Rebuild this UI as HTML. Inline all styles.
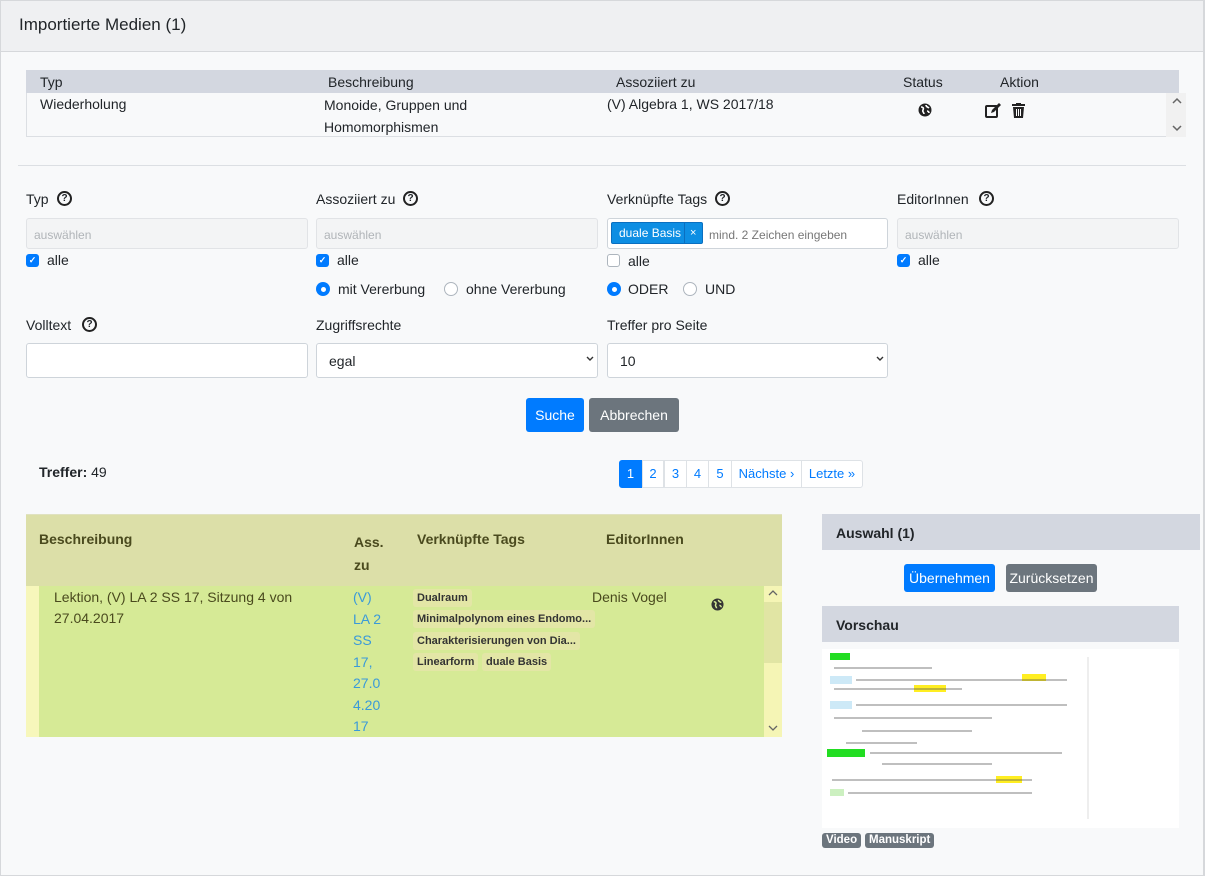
<!DOCTYPE html>
<html><head><meta charset="utf-8">
<style>
*{box-sizing:border-box;margin:0;padding:0}
body{width:1205px;height:876px;background:#f8f9fa;font-family:"Liberation Sans",sans-serif;font-size:14px;color:#212529;position:relative;overflow:hidden}
.a{position:absolute}
.hdr{left:0;top:0;width:1205px;height:52px;background:#eff0f2;border-bottom:1px solid #d6d8db;border-top:1px solid #d6d8db}
.hdr span{position:absolute;left:19px;top:14px;font-size:17px}
.inp{background:#f3f4f5;border:1px solid #e1e3e6;border-radius:3px;height:31px;color:#b0b4b8;font-size:12px;padding:9px 0 0 7px}
.inpw{background:#fff;border:1px solid #ced4da;border-radius:3px;height:35px;font-size:14px;padding:9px 0 0 12px}
.cb{width:13px;height:13px;border-radius:3px;background:#007bff;color:#fff;font-size:9px;line-height:13px;text-align:center;font-weight:bold}
.cbo{width:13px;height:13px;border-radius:3px;border:1px solid #adb5bd;background:#fff}
.rd{width:14px;height:14px;border-radius:50%;background:#007bff}
.rd::after{content:"";position:absolute;left:4.5px;top:4.5px;width:5px;height:5px;border-radius:50%;background:#fff}
.rdo{width:14px;height:14px;border-radius:50%;border:1px solid #adb5bd;background:#fff}
.q{width:15px;height:15px;border:2px solid #222;border-radius:50%;font-size:10px;font-weight:bold;text-align:center;line-height:11px}
.btn{border-radius:3px;color:#fff;font-size:14px;text-align:center}
.pg{top:460px;height:28px;border:1px solid #dee2e6;background:#fff;color:#007bff;font-size:13px;text-align:center;line-height:26px}
.tag{background:#e3e6a6;font-weight:bold;font-size:11px;color:#333;padding:2px 4px;border-radius:3px;height:18px;line-height:14px}
.badge{background:#6c757d;color:#fff;font-weight:bold;font-size:11.5px;border-radius:3px;height:15px;line-height:15px;padding:0 4px;top:833px}
</style></head><body>
<div class="a hdr"><span>Importierte Medien (1)</span></div>
<div class="a" style="left:0;top:0;width:1px;height:876px;background:#d6d8db"></div>
<div class="a" style="left:1203px;top:0;width:2px;height:876px;background:#d6d8db"></div>
<div class="a" style="left:0;top:875px;width:1205px;height:1px;background:#d6d8db"></div>

<div class="a" style="left:26px;top:70px;width:1153px;height:67px;border:1px solid #dcdfe3;background:#f8f9fa"></div>
<div class="a" style="left:26px;top:70px;width:1153px;height:23px;background:#d3d7e0"></div>
<div class="a" style="left:40px;top:74px">Typ</div>
<div class="a" style="left:328px;top:74px">Beschreibung</div>
<div class="a" style="left:616px;top:74px">Assoziiert zu</div>
<div class="a" style="left:903px;top:74px">Status</div>
<div class="a" style="left:1000px;top:74px">Aktion</div>
<div class="a" style="left:40px;top:96px">Wiederholung</div>
<div class="a" style="left:324px;top:94px;line-height:22px">Monoide, Gruppen und<br>Homomorphismen</div>
<div class="a" style="left:607px;top:96px">(V) Algebra 1, WS 2017/18</div>
<svg class="a" style="left:918px;top:103px" width="14" height="14" viewBox="0 0 14 14"><circle cx="7" cy="7" r="6.5" fill="#222"/><path d="M3 4c2 0 3 1 2 3s1 2 1 4M8 2c0 2 2 2 3 3M9 8c1 0 2 1 2 2" stroke="#fff" stroke-width="1.6" fill="none"/></svg>
<svg class="a" style="left:985px;top:103px" width="16" height="15" viewBox="0 0 16 15"><rect x="1" y="3" width="11" height="11" rx="1" fill="none" stroke="#222" stroke-width="2"/><path d="M6 10l1-3 7-7 2 2-7 7z" fill="#222"/></svg>
<svg class="a" style="left:1012px;top:103px" width="13" height="15" viewBox="0 0 13 15"><rect x="0" y="1" width="13" height="2" fill="#222"/><rect x="4" y="0" width="5" height="2" fill="#222"/><path d="M1 4h11l-1 11H2z" fill="#222"/><path d="M4.5 6v7M6.5 6v7M8.5 6v7" stroke="#fff" stroke-width="1"/></svg>
<div class="a" style="left:1166px;top:93px;width:20px;height:44px;background:#f1f1f1"></div>
<svg class="a" style="left:1172px;top:97px" width="10" height="36" viewBox="0 0 10 36"><path d="M1 6l4-4 4 4M1 29l4 4 4-4" stroke="#666" stroke-width="1.5" fill="none"/></svg>

<div class="a" style="left:18px;top:165px;width:1168px;height:1px;background:#dcdfe3"></div>

<div class="a" style="left:26px;top:191px">Typ</div><div class="a q" style="left:57px;top:191px">?</div>
<div class="a" style="left:316px;top:191px">Assoziiert zu</div><div class="a q" style="left:403px;top:191px">?</div>
<div class="a" style="left:607px;top:191px">Verknüpfte Tags</div><div class="a q" style="left:715px;top:191px">?</div>
<div class="a" style="left:897px;top:191px">EditorInnen</div><div class="a q" style="left:979px;top:191px">?</div>

<div class="a inp" style="left:26px;top:218px;width:282px">auswählen</div>
<div class="a inp" style="left:316px;top:218px;width:282px">auswählen</div>
<div class="a inpw" style="left:607px;top:218px;width:281px;height:31px;padding:0"></div>
<div class="a" style="left:611px;top:222px;width:92px;height:22px;background:#0d8ee3;border:1px solid #0a6fc0;border-radius:2px;color:#fff;font-size:12px;line-height:20px;padding-left:7px">duale Basis<span style="position:absolute;left:72px;top:0;border-left:1px solid #0a6fc0;padding-left:5px;font-size:11px;height:20px">×</span></div>
<div class="a" style="left:709px;top:228px;font-size:12px;color:#777">mind. 2 Zeichen eingeben</div>
<div class="a inp" style="left:897px;top:218px;width:282px">auswählen</div>

<div class="a cb" style="left:26px;top:254px">✓</div><div class="a" style="left:47px;top:252px">alle</div>
<div class="a cb" style="left:316px;top:254px">✓</div><div class="a" style="left:337px;top:252px">alle</div>
<div class="a cbo" style="left:607px;top:254px"></div><div class="a" style="left:628px;top:253px">alle</div>
<div class="a cb" style="left:897px;top:254px">✓</div><div class="a" style="left:918px;top:252px">alle</div>

<div class="a rd" style="left:316px;top:282px"></div><div class="a" style="left:338px;top:281px">mit Vererbung</div>
<div class="a rdo" style="left:444px;top:282px"></div><div class="a" style="left:466px;top:281px">ohne Vererbung</div>
<div class="a rd" style="left:607px;top:282px"></div><div class="a" style="left:628px;top:281px">ODER</div>
<div class="a rdo" style="left:683px;top:282px"></div><div class="a" style="left:705px;top:281px">UND</div>

<div class="a" style="left:26px;top:317px">Volltext</div><div class="a q" style="left:82px;top:317px">?</div>
<div class="a" style="left:316px;top:317px">Zugriffsrechte</div>
<div class="a" style="left:607px;top:317px">Treffer pro Seite</div>
<div class="a inpw" style="left:26px;top:343px;width:282px"></div>
<div class="a inpw" style="left:316px;top:343px;width:282px">egal</div>
<div class="a inpw" style="left:607px;top:343px;width:281px">10</div>
<svg class="a" style="left:586px;top:356px" width="8" height="6" viewBox="0 0 8 6"><path d="M1 1l3 3 3-3" stroke="#333" stroke-width="1.4" fill="none"/></svg>
<svg class="a" style="left:876px;top:356px" width="8" height="6" viewBox="0 0 8 6"><path d="M1 1l3 3 3-3" stroke="#333" stroke-width="1.4" fill="none"/></svg>

<div class="a btn" style="left:526px;top:398px;width:58px;height:34px;line-height:34px;background:#007bff">Suche</div>
<div class="a btn" style="left:589px;top:398px;width:90px;height:34px;line-height:34px;background:#6c757d">Abbrechen</div>

<div class="a" style="left:39px;top:464px"><b>Treffer:</b> 49</div>
<div class="a pg" style="left:619px;width:23px;background:#007bff;color:#fff;border-color:#007bff;border-radius:3px 0 0 3px">1</div>
<div class="a pg" style="left:642px;width:22px">2</div>
<div class="a pg" style="left:664px;width:23px">3</div>
<div class="a pg" style="left:686px;width:23px">4</div>
<div class="a pg" style="left:708px;width:24px">5</div>
<div class="a pg" style="left:731px;width:71px">Nächste ›</div>
<div class="a pg" style="left:801px;width:62px;border-radius:0 3px 3px 0">Letzte »</div>

<div class="a" style="left:26px;top:514px;width:756px;height:72px;background:#dcdfa8;border-top:1px solid #e0e2c0"></div>
<div class="a" style="left:39px;top:531px;font-weight:bold;color:#4a4a1e">Beschreibung</div>
<div class="a" style="left:354px;top:531px;font-weight:bold;color:#4a4a1e;line-height:23px">Ass.<br>zu</div>
<div class="a" style="left:417px;top:531px;font-weight:bold;color:#4a4a1e">Verknüpfte Tags</div>
<div class="a" style="left:606px;top:531px;font-weight:bold;color:#4a4a1e">EditorInnen</div>
<div class="a" style="left:26px;top:586px;width:756px;height:151px;background:#d6ea96"></div>
<div class="a" style="left:26px;top:586px;width:13px;height:151px;background:#f7f7bb"></div>
<div class="a" style="left:764px;top:586px;width:18px;height:151px;background:#f5f5b5"></div>
<div class="a" style="left:764px;top:602px;width:18px;height:61px;background:#e1e5a4"></div>
<svg class="a" style="left:768px;top:589px" width="10" height="146" viewBox="0 0 10 146"><path d="M1 6l4-4 4 4M1 137l4 4 4-4" stroke="#666" stroke-width="1.3" fill="none"/></svg>
<div class="a" style="left:54px;top:587px;line-height:21px;color:#4a4a1e">Lektion, (V) LA 2 SS 17, Sitzung 4 von<br>27.04.2017</div>
<div class="a" style="left:353px;top:587px;line-height:21.5px;color:#3a9ad9">(V)<br>LA 2<br>SS<br>17,<br>27.0<br>4.20<br>17</div>
<div class="a tag" style="left:413px;top:589px">Dualraum</div>
<div class="a tag" style="left:413px;top:610px">Minimalpolynom eines Endomo...</div>
<div class="a tag" style="left:413px;top:632px">Charakterisierungen von Dia...</div>
<div class="a tag" style="left:413px;top:653px">Linearform</div>
<div class="a tag" style="left:482px;top:653px">duale Basis</div>
<div class="a" style="left:592px;top:589px;color:#4a4a1e">Denis Vogel</div>
<svg class="a" style="left:711px;top:598px" width="13" height="13" viewBox="0 0 14 14"><circle cx="7" cy="7" r="6.5" fill="#333"/><path d="M3 4c2 0 3 1 2 3s1 2 1 4M8 2c0 2 2 2 3 3M9 8c1 0 2 1 2 2" stroke="#d6ea96" stroke-width="1.6" fill="none"/></svg>

<div class="a" style="left:822px;top:514px;width:378px;height:36px;background:#d3d7e0;font-weight:bold;padding:11px 0 0 14px">Auswahl (1)</div>
<div class="a btn" style="left:904px;top:564px;width:91px;height:28px;line-height:28px;background:#007bff">Übernehmen</div>
<div class="a btn" style="left:1006px;top:564px;width:91px;height:28px;line-height:28px;background:#6c757d">Zurücksetzen</div>
<div class="a" style="left:822px;top:606px;width:357px;height:36px;background:#d3d7e0;font-weight:bold;padding:11px 0 0 14px">Vorschau</div>
<div class="a" style="left:822px;top:649px;width:357px;height:179px;background:#fff"></div>
<svg class="a" style="left:822px;top:649px" width="270" height="180" viewBox="0 0 270 180">
<rect x="8" y="4" width="20" height="7" fill="#22dd22"/>
<rect x="8" y="27" width="22" height="8" fill="#cde9f7"/>
<rect x="8" y="52" width="22" height="8" fill="#cde9f7"/>
<rect x="200" y="25" width="24" height="7" fill="#ffee22"/>
<rect x="92" y="36" width="32" height="7" fill="#ffee22"/>
<rect x="5" y="100" width="38" height="8" fill="#22dd22"/>
<rect x="174" y="127" width="26" height="7" fill="#ffee22"/>
<rect x="8" y="140" width="14" height="7" fill="#ccf0c0"/>
<g stroke="#555" stroke-width="0.8">
<line x1="12" y1="19" x2="110" y2="19"/><line x1="34" y1="31" x2="245" y2="31"/><line x1="12" y1="40" x2="140" y2="40"/>
<line x1="34" y1="56" x2="245" y2="56"/><line x1="12" y1="69" x2="170" y2="69"/><line x1="40" y1="82" x2="150" y2="82"/>
<line x1="24" y1="94" x2="95" y2="94"/><line x1="48" y1="104" x2="240" y2="104"/><line x1="60" y1="115" x2="170" y2="115"/>
<line x1="10" y1="131" x2="210" y2="131"/><line x1="26" y1="144" x2="210" y2="144"/>
</g>
<line x1="266" y1="8" x2="266" y2="170" stroke="#ddd"/>
</svg>
<div class="a badge" style="left:822px">Video</div>
<div class="a badge" style="left:865px">Manuskript</div>
</body></html>
